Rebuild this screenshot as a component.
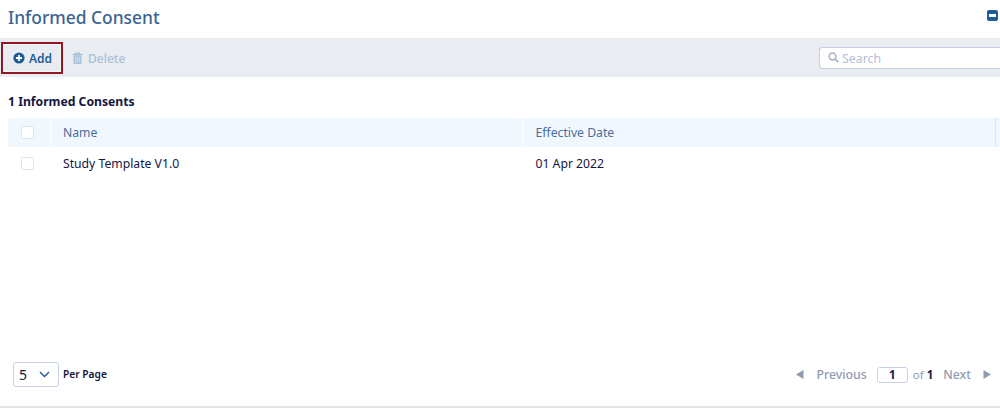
<script>
  const columns = ['Name', 'Effective Date'];
</script>

<div class="page">
  <header class="title-row">
    <h1>Informed Consent</h1>
    <span class="collapse"><span></span></span>
  </header>

  <div class="toolbar">
    <button class="btn add">
      <svg width="12" height="12" viewBox="0 0 12 12"><circle cx="6" cy="6" r="5.6" fill="#1f5d99"/><path d="M6 3v6M3 6h6" stroke="#fff" stroke-width="1.8"/></svg>
      <span>Add</span>
    </button>
    <button class="btn del">
      <svg width="11" height="12" viewBox="0 0 11 12"><path d="M3.6 2V1h3.8v1M.5 2.3h10" stroke="#a9c0d8" stroke-width="1.2" fill="none"/><path d="M1.5 3.2h8V11a1 1 0 0 1-1 1h-6a1 1 0 0 1-1-1z" fill="#a9c0d8"/><path d="M3.7 4.5v6M5.5 4.5v6M7.3 4.5v6" stroke="#e9edf2" stroke-width=".7"/></svg>
      <span>Delete</span>
    </button>
    <div class="search">
      <svg width="11" height="11" viewBox="0 0 11 11"><circle cx="4.5" cy="4.5" r="3.4" fill="none" stroke="#a4b2c8" stroke-width="1.5"/><path d="M7 7l3.2 3.2" stroke="#a4b2c8" stroke-width="1.7"/></svg>
      <span>Search</span>
    </div>
  </div>

  <div class="count">1 Informed Consents</div>

  <div class="table">
    <div class="row head">
      <div class="cell check"><i class="box"></i></div>
      <div class="cell name">{columns[0]}</div>
      <div class="cell date">{columns[1]}</div>
      <div class="cell tail"></div>
    </div>
    <div class="row body">
      <div class="cell check"><i class="box"></i></div>
      <div class="cell name">Study Template V1.0</div>
      <div class="cell date">01 Apr 2022</div>
      <div class="cell tail"></div>
    </div>
  </div>

  <footer class="pager">
    <div class="per">
      <div class="select">
        <span>5</span>
        <svg width="11" height="7" viewBox="0 0 11 7"><path d="M1 1l4.5 4.5L10 1" fill="none" stroke="#1f5d99" stroke-width="1.4"/></svg>
      </div>
      <b>Per Page</b>
    </div>
    <div class="nav">
      <svg width="8" height="9" viewBox="0 0 8 9"><path d="M7.5 0v9L0 4.5z" fill="#8f9bb0"/></svg>
      <span class="link prev">Previous</span>
      <span class="page-box">1</span>
      <span class="of">of <b>1</b></span>
      <span class="link next">Next</span>
      <svg width="8" height="9" viewBox="0 0 8 9"><path d="M.5 0v9L8 4.5z" fill="#8f9bb0"/></svg>
    </div>
  </footer>
</div>

<style>
  :global(body) { margin: 0; background: #fff; }
  .page {
    width: 1000px; height: 408px; box-sizing: border-box; overflow: hidden;
    display: flex; flex-direction: column;
    font-family: "Noto Sans", "Open Sans", sans-serif; font-size: 12.2px; color: #14163f;
    border-bottom: 2px solid #e4e4e6;
  }
  .title-row { height: 38px; display: flex; align-items: center; justify-content: space-between; padding: 0 2px 0 8px; flex: none; }
  h1 { margin: 0 0 4px; font-size: 17.4px; font-weight: 500; color: #3a6391; line-height: 24px; }
  .collapse { width: 11px; height: 11px; background: #1f5d99; border-radius: 2px; display: flex; align-items: center; justify-content: center; margin-top: -7px; }
  .collapse span { width: 7px; height: 2.5px; background: #fff; }
  .toolbar { height: 39px; flex: none; background: #e9edf2; display: flex; align-items: center; padding-left: 1px; }
  .btn { border: 0; background: none; font: inherit; font-size: 12px; font-weight: 500; padding: 0; display: flex; align-items: center; gap: 4px; }
  .btn span { padding-top: 1px; }
  .add { width: 62px; height: 32px; box-sizing: border-box; border: 2px solid #941824; padding-left: 10px; color: #1f5d99; font-weight: 600; box-shadow: inset 0 0 0 1px #f5f7fa; }
  .del { margin-left: 9px; gap: 5px; color: #a9c0d8; }
  .search { margin-left: auto; width: 181px; height: 22px; box-sizing: border-box; border: 1px solid #c3d0e3; border-right: 0; border-radius: 3px 0 0 3px; background: #fff; display: flex; align-items: center; gap: 3px; padding-left: 8px; color: #b4c0d8; font-size: 12.4px; }
  .search span { padding-top: 1px; }
  .count { flex: none; margin-top: 16px; padding-left: 8px; height: 25px; line-height: 18px; font-size: 12.2px; font-weight: 700; }
  .table { flex: 1; margin-left: 8px; }
  .row { display: flex; }
  .head { height: 29px; background: #f1f7fe; color: #4a6d9c; }
  .head .cell { padding-bottom: 1px; }
  .body { height: 33px; color: #14163f; }
  .body .cell { padding-bottom: 1px; }
  .cell { display: flex; align-items: center; box-sizing: border-box; padding-left: 12px; }
  .head .check, .body .check { width: 43px; padding: 0 0 0 13px; }
  .name { width: 472px; }
  .date { width: 473px; }
  .head .date, .body .date { padding-left: 12.5px; }
  .tail { flex: 1; padding: 0; }
  .head .check, .head .name { border-right: 1px solid #fff; }
  .head .date { border-right: 1px solid #dfe4ec; }
  .box { display: block; width: 13px; height: 13px; box-sizing: border-box; background: #fff; border: 1px solid #dfe5ee; border-radius: 2px; }
  .pager { flex: none; height: 44px; display: flex; justify-content: space-between; align-items: flex-start; padding: 0 9px 0 13px; }
  .per { display: flex; align-items: center; gap: 4px; }
  .select { width: 46px; height: 25px; box-sizing: border-box; border: 1px solid #c8d4e6; border-radius: 3px; display: flex; align-items: center; justify-content: space-between; padding: 0 8px 0 5px; font-size: 14px; }
  .per b { font-size: 10.2px; font-weight: 600; padding-bottom: 1px; }
  .nav { display: flex; align-items: center; height: 25px; color: #8f9bb0; font-size: 12.3px; }
  .link { font-weight: 500; }
  .prev { margin-left: 12px; }
  .page-box { width: 31px; height: 16px; margin-left: 10px; box-sizing: border-box; border: 1px solid #c8d4e6; border-radius: 3px; color: #14163f; font-size: 11.5px; font-weight: 700; display: flex; align-items: center; justify-content: center; }
  .of { margin-left: 5px; font-size: 11.5px; }
  .of b { color: #14163f; font-weight: 700; }
  .next { margin-left: 10px; margin-right: 12px; }
</style>
